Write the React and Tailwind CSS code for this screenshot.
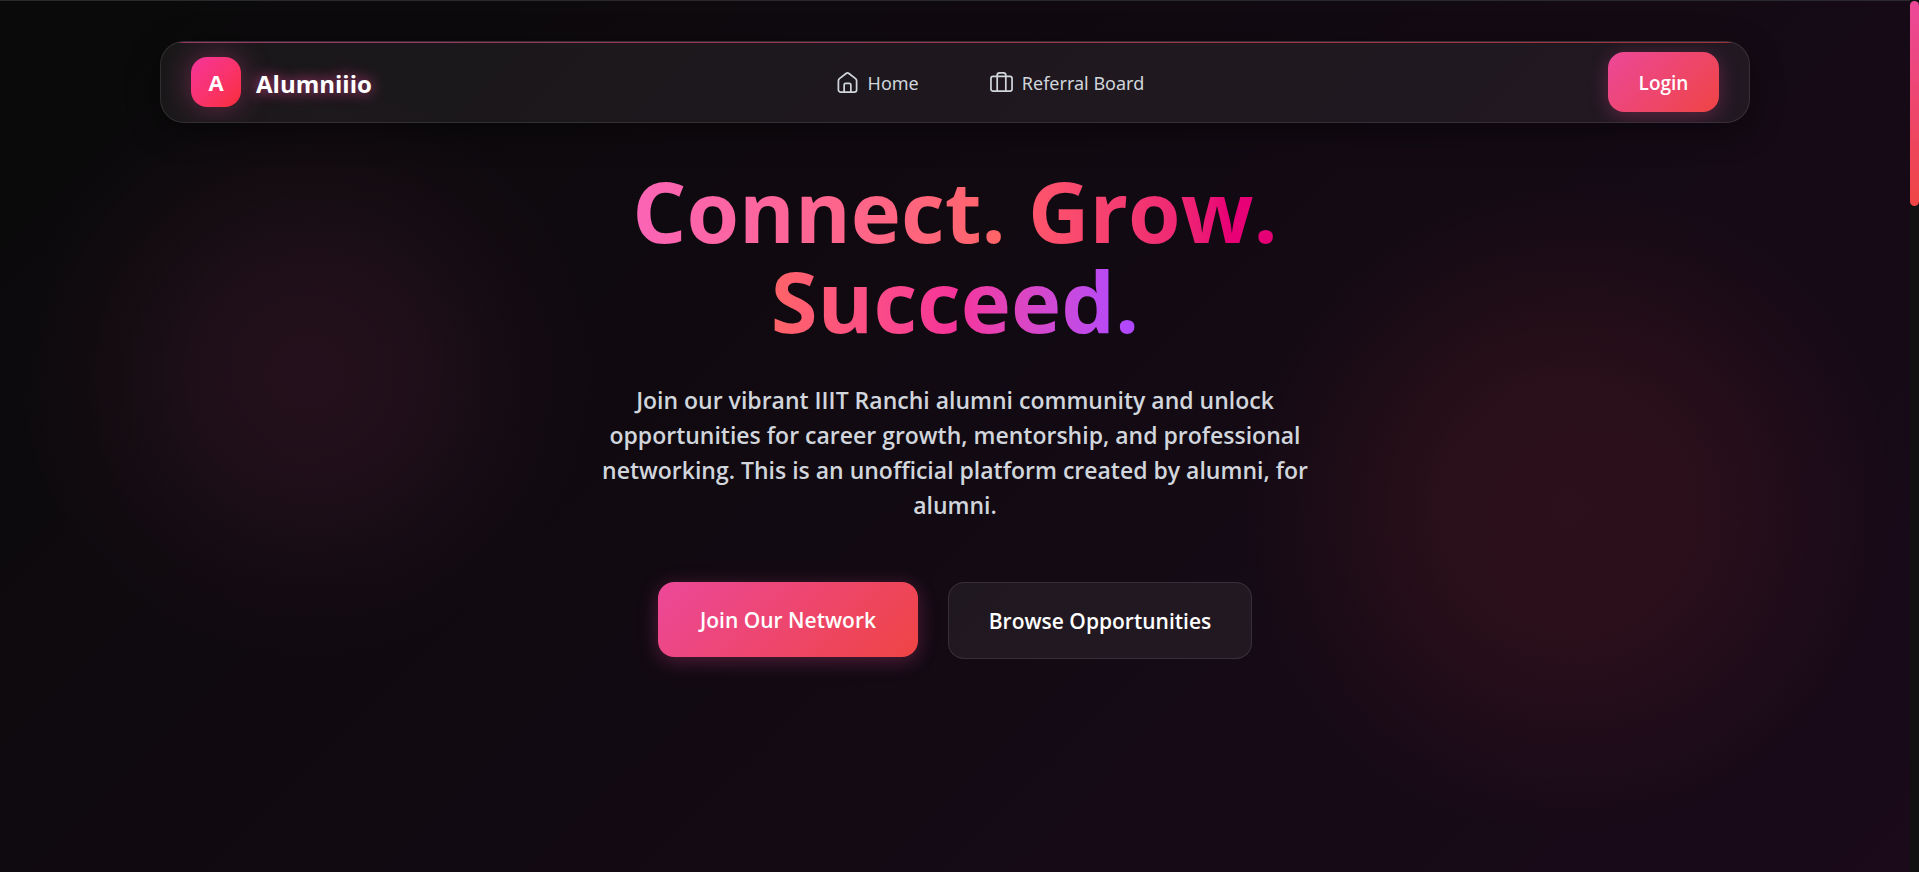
function NavIcon({ children }) {
  return (
    <svg viewBox="0 0 24 24" className="size-[23px]" fill="none" stroke="currentColor" strokeWidth="1.8" strokeLinecap="round" strokeLinejoin="round" aria-hidden="true">
      {children}
    </svg>
  );
}

function Header() {
  return (
    <header className="mx-[160px] rounded-3xl shadow-[0_8px_32px_rgba(0,0,0,0.4)]">
      <div className="relative flex h-[82px] items-center justify-between overflow-hidden rounded-3xl border border-white/10 bg-white/6 px-[30px]">
        <div className="absolute inset-x-0 top-0 h-px bg-[linear-gradient(90deg,rgba(236,72,153,0.6),rgba(239,68,68,0.6))]" />
        <a href="#" className="flex items-center gap-[15px]">
          <span className="flex size-[50px] items-center justify-center rounded-2xl bg-gradient-to-br from-[#f6339a] to-[#fb2c36] text-[22px] font-bold text-white shadow-[0_0_30px_rgba(236,72,153,0.4)]">A</span>
          <span className="pt-1 text-[24px] font-bold text-white [text-shadow:0_0_14px_rgba(236,72,153,0.9)]">Alumniiio</span>
        </a>
        <nav className="flex items-center gap-[71px] font-['Noto_Sans',sans-serif] text-[18px] text-gray-300">
          <a href="#" className="flex items-center gap-[9px]">
            <NavIcon>
              <path d="M2.500 10.200c0-.9.400-1.700 1.100-2.300L10.500 2.600a2.400 2.400 0 0 1 3 0l6.900 5.300c.7.600 1.100 1.400 1.100 2.300V19.500a2.500 2.500 0 0 1-2.500 2.500H5A2.500 2.500 0 0 1 2.500 19.500z" />
              <path d="M8.500 22V14.500A1.500 1.500 0 0 1 10 13h4a1.500 1.500 0 0 1 1.500 1.500V22" />
            </NavIcon>
            <span className="pt-0.5">Home</span>
          </a>
          <a href="#" className="flex items-center gap-[9px]">
            <NavIcon>
              <rect x="1" y="5.500" width="22" height="15.500" rx="2.200" />
              <path d="M7.500 21V4.500A2.500 2.500 0 0 1 10 2h4a2.500 2.500 0 0 1 2.500 2.500V21" />
            </NavIcon>
            <span className="pt-0.5">Referral Board</span>
          </a>
        </nav>
        <button type="button" className="h-[60px] w-[111px] rounded-2xl bg-[linear-gradient(135deg,#ec4899,#ef4444)] pt-0.5 text-[19px] font-semibold text-white shadow-[0_4px_20px_rgba(236,72,153,0.3)]">Login</button>
      </div>
    </header>
  );
}

export default function App() {
  return (
    <div className="flex min-h-screen bg-[#111111] font-['Open_Sans','Noto_Sans',sans-serif]">
      <div className="min-w-0 flex-1 border-t border-[#2a2a2e] bg-[radial-gradient(circle_at_16%_370px,rgba(236,72,153,0.1)_0px,rgba(236,72,153,0.07)_120px,rgba(236,72,153,0.02)_220px,transparent_290px),radial-gradient(circle_at_82%_505px,rgba(239,68,68,0.1)_0px,rgba(239,68,68,0.09)_130px,rgba(239,68,68,0.035)_240px,transparent_330px),linear-gradient(135deg,#0a0a0a_0%,#1a0a1a_100%)] pt-10">
        <Header />
        <main className="flex flex-col items-center pt-[42px] text-center">
          <h1 className="text-[85px] leading-[90px] font-bold">
            <span className="bg-gradient-to-r from-pink-400 to-red-400 bg-clip-text text-transparent">Connect.</span>{" "}
            <span className="bg-gradient-to-r from-[#ff566b] to-pink-600 to-90% bg-clip-text text-transparent">Grow.</span>
            <br />
            <span className="bg-gradient-to-r from-red-400 via-pink-500 to-purple-500 bg-clip-text text-transparent">Succeed.</span>
          </h1>
          <p className="mt-[38px] max-w-[750px] text-[23px] leading-[35px] font-semibold text-gray-300">
            Join our vibrant IIIT Ranchi alumni community and unlock opportunities for career growth, mentorship, and professional networking. This is an unofficial platform created by alumni, for alumni.
          </p>
          <div className="mt-[59px] flex items-start gap-[30px]">
            <button type="button" className="h-[75px] w-[260px] rounded-2xl bg-[linear-gradient(135deg,#ec4899,#ef4444)] pt-0.5 text-[21px] font-semibold text-white shadow-[0_4px_20px_rgba(236,72,153,0.3)]">Join Our Network</button>
            <button type="button" className="h-[77px] w-[304px] rounded-2xl border border-white/10 bg-white/6 pt-0.5 text-[21px] font-semibold text-white">Browse Opportunities</button>
          </div>
        </main>
      </div>
      <div className="w-[9px]">
        <div className="mt-px h-[205px] rounded-full bg-[linear-gradient(180deg,#ec4899,#ef4444)]" />
      </div>
    </div>
  );
}
